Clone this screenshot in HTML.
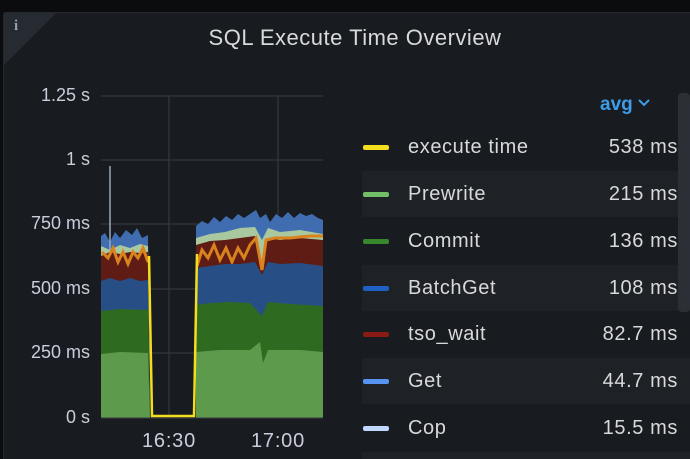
<!DOCTYPE html>
<html><head><meta charset="utf-8"><style>
html,body{margin:0;padding:0;background:#0b0c0e;width:690px;height:459px;overflow:hidden}
body{font-family:"Liberation Sans",Arial,sans-serif;position:relative}
.panel{position:absolute;left:3px;top:12px;width:690px;height:447px;background:#181b1f;border-left:1px solid #24272d;border-top:1px solid #24272d;border-radius:3px 0 0 0;box-sizing:border-box}
.corner{position:absolute;left:4px;top:13px;width:0;height:0;border-top:52px solid #262a31;border-right:52px solid transparent}
.info{position:absolute;left:14px;top:18px;color:#9aa0a8;font:bold 15px "Liberation Serif",serif}
.title{position:absolute;left:0;width:710px;top:25px;text-align:center;color:#d8d9da;font-size:22px;letter-spacing:0.5px}
.yl{position:absolute;right:600px;color:#ccccdc;font-size:18px;text-align:right;white-space:nowrap}
.xl{position:absolute;top:430px;color:#ccccdc;font-size:20px;letter-spacing:0.8px;width:80px;text-align:center}
.row{position:absolute;left:362px;width:328px;height:46px;overflow:hidden}
.row.alt{background:#1e2126}
.sw{position:absolute;left:1px;top:21px;width:26px;height:5px;border-radius:2px}
.lb{position:absolute;left:46px;top:12px;color:#d8d9da;font-size:20px;letter-spacing:0.6px}
.vl{position:absolute;left:0;width:316px;text-align:right;top:12px;color:#d8d9da;font-size:20px;letter-spacing:0.6px}
.avg{position:absolute;left:600px;top:94px;color:#3d9de8;font-size:19px;font-weight:bold}
.scroll{position:absolute;left:678px;top:93px;width:12px;height:219px;background:#2c2f35;border-radius:4px}
</style></head><body>
<div class="panel"></div>
<div class="corner"></div>
<div class="info">i</div>
<div class="title">SQL Execute Time Overview</div>
<div class="yl" style="top:85px">1.25 s</div>
<div class="yl" style="top:149px">1 s</div>
<div class="yl" style="top:213px">750 ms</div>
<div class="yl" style="top:278px">500 ms</div>
<div class="yl" style="top:342px">250 ms</div>
<div class="yl" style="top:407px">0 s</div>
<div class="xl" style="left:129px">16:30</div>
<div class="xl" style="left:238px">17:00</div>
<svg style="position:absolute;left:0;top:0" width="690" height="459">
<g stroke="#3a3d43" stroke-width="1">
<line x1="101" y1="96" x2="323" y2="96"/><line x1="101" y1="160" x2="323" y2="160"/>
<line x1="101" y1="224" x2="323" y2="224"/><line x1="101" y1="289" x2="323" y2="289"/>
<line x1="101" y1="353" x2="323" y2="353"/><line x1="169" y1="96" x2="169" y2="418"/>
<line x1="278" y1="96" x2="278" y2="418"/>
</g>
<polygon fill="#3f6db0" points="101,418 101,236 105,233 110,242 115,232 120,238 126,230 132,235 137,228 142,238 148,235 150,418"/>
<polygon fill="#3f6db0" points="196,418 196,226 202,221 208,224 214,217 220,222 226,216 232,220 238,214 244,218 250,214 256,210 260,218 266,214 270,222 276,214 282,218 288,212 294,218 300,213 306,216 312,214 318,218 323,220 323,418"/>
<polygon fill="#a9c8a0" points="101,418 101,246 110,250 120,245 130,248 140,244 148,246 150,418"/>
<polygon fill="#a9c8a0" points="196,418 196,238 210,234 225,232 240,228 255,227 262,240 268,228 280,232 300,230 323,234 323,418"/>
<polygon fill="#5e1c14" points="101,418 101,256 110,252 120,254 130,252 140,253 148,252 150,418"/>
<polygon fill="#5e1c14" points="196,418 196,245 210,241 225,240 240,238 255,236 262,262 268,238 280,240 300,238 323,240 323,418"/>
<polyline fill="none" stroke="#d9821e" stroke-width="3" points="102,252 108,258 113,248 118,262 123,252 128,264 133,252 138,258 143,248 148,262"/>
<polyline fill="none" stroke="#d9821e" stroke-width="3" points="197,266 202,250 208,258 214,245 220,260 226,248 232,262 238,248 244,258 250,245 256,238 262,270 266,240 275,238 290,238 310,236 323,236"/>
<polygon fill="#274f86" points="101,418 101,281 110,278 120,281 130,278 140,281 148,280 150,418"/>
<polygon fill="#274f86" points="196,418 196,268 210,266 225,264 240,264 255,262 262,275 268,262 280,264 300,263 323,266 323,418"/>
<polygon fill="#2f6a21" points="101,418 101,311 120,309 148,310 150,418"/>
<polygon fill="#2f6a21" points="196,418 196,305 210,303 230,302 250,303 262,316 268,302 290,304 323,306 323,418"/>
<polygon fill="#5e9a4b" points="101,418 101,354 120,352 148,353 150,418"/>
<polygon fill="#5e9a4b" points="196,418 196,352 220,350 250,350 260,342 263,363 268,350 300,350 323,352 323,418"/>
<line x1="110" y1="250" x2="110" y2="166" stroke="#9ab" stroke-width="1.5"/>
<polyline fill="none" stroke="#f2de1c" stroke-width="2.5" points="149,256 152,416 194,416 197,254"/>
<line x1="101" y1="418" x2="323" y2="418" stroke="#3a3d43"/>
</svg>
<div class="avg">avg <svg width="12" height="8" style="vertical-align:3px"><path d="M1 1 L6 6 L11 1" fill="none" stroke="#3d9de8" stroke-width="2"/></svg></div>
<div class="row" style="top:124px"><div class="sw" style="background:#f2de1c"></div><div class="lb">execute time</div><div class="vl">538 ms</div></div>
<div class="row alt" style="top:171px"><div class="sw" style="background:#73bf69"></div><div class="lb">Prewrite</div><div class="vl">215 ms</div></div>
<div class="row" style="top:218px"><div class="sw" style="background:#37872d"></div><div class="lb">Commit</div><div class="vl">136 ms</div></div>
<div class="row alt" style="top:265px"><div class="sw" style="background:#1f60c4"></div><div class="lb">BatchGet</div><div class="vl">108 ms</div></div>
<div class="row" style="top:311px"><div class="sw" style="background:#8a1a14"></div><div class="lb">tso_wait</div><div class="vl">82.7 ms</div></div>
<div class="row alt" style="top:358px"><div class="sw" style="background:#5794f2"></div><div class="lb">Get</div><div class="vl">44.7 ms</div></div>
<div class="row" style="top:405px"><div class="sw" style="background:#c0d8ff"></div><div class="lb">Cop</div><div class="vl">15.5 ms</div></div>
<div class="row alt" style="top:452px;height:7px"></div>
<div class="scroll"></div>
</body></html>
